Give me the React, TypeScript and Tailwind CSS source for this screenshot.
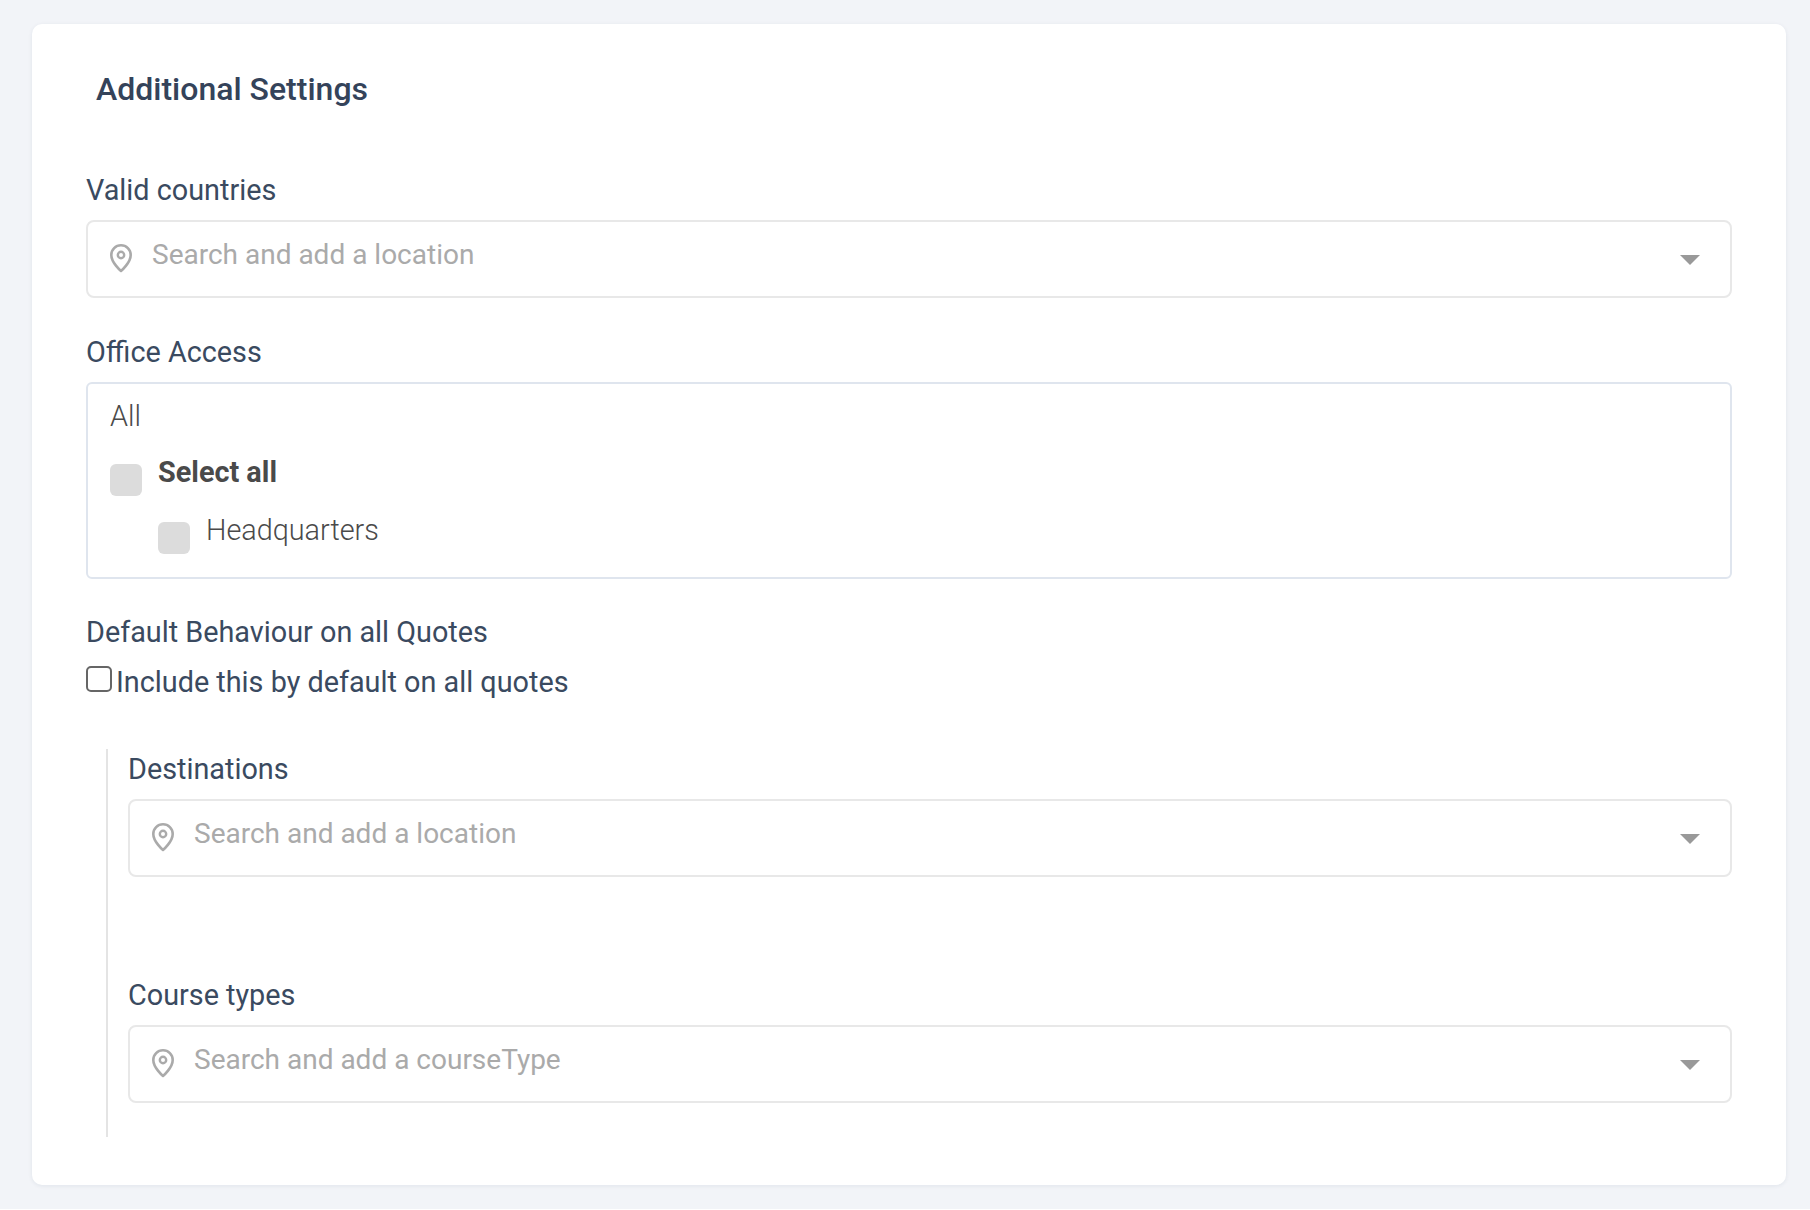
const PinIcon = () => (
  <svg width="22" height="29" viewBox="0 0 22 29" fill="none" className="shrink-0">
    <path
      d="M11 27C11 27 20.7 18.8 20.7 11C20.7 5.5 16.4 1.3 11 1.3C5.6 1.3 1.3 5.5 1.3 11C1.3 18.8 11 27 11 27Z"
      stroke="#aaaaaa"
      strokeWidth="2.6"
      strokeLinejoin="round"
    />
    <circle cx="11" cy="11" r="3.2" stroke="#aaaaaa" strokeWidth="2.4" />
  </svg>
);

const LocationSelect = ({ placeholder }: { placeholder: string }) => (
  <div className="flex h-[78px] items-center rounded-[8px] border-2 border-[#e8e8e8] bg-white pl-[22px] pr-[30px]">
    <div className="mt-[-2px]">
      <PinIcon />
    </div>
    <span className="ml-[20px] mt-[-9px] flex-1 text-[28px] leading-[36px] text-[#aaaaaa]">
      {placeholder}
    </span>
    <div className="mt-[2px] h-0 w-0 border-x-[10px] border-t-[10px] border-x-transparent border-t-[#999999]" />
  </div>
);

const Label = ({ children }: { children: string }) => (
  <label className="mb-[12px] block text-[28.8px] leading-[36px] text-[#3a4a60]">
    {children}
  </label>
);

const App = () => {
  return (
    <div className="bg-[#f2f4f8] pb-[24px] pl-[32px] pr-[24px] pt-[24px] font-['Roboto',sans-serif]">
      <div className="rounded-[10px] bg-white pb-[48px] pl-[54px] pr-[54px] pt-[45px] shadow-[0_1px_4px_rgba(30,50,90,0.08)]">
        <h2 className="mb-[63px] pl-[10px] text-[32px] font-medium leading-[40px] text-[#34435a]">
          Additional Settings
        </h2>

        <Label>Valid countries</Label>
        <LocationSelect placeholder="Search and add a location" />

        <div className="mt-[36px]">
          <Label>Office Access</Label>
          <div className="h-[197px] rounded-[6px] border-2 border-[#dfe5ee] pl-[22px] pt-[14px] text-[#4a4a4a]">
            <div className="text-[28.8px] font-light leading-[36px]">All</div>
            <div className="mt-[24px] flex items-start">
              <div className="mt-[6px] h-[32px] w-[32px] rounded-[6px] bg-[#dcdcdc]" />
              <span className="ml-[16px] text-[28.8px] font-bold leading-[28px]">Select all</span>
            </div>
            <div className="ml-[48px] mt-[20px] flex items-start">
              <div className="mt-[6px] h-[32px] w-[32px] rounded-[6px] bg-[#dcdcdc]" />
              <span className="ml-[16px] text-[28.8px] font-light leading-[28px]">Headquarters</span>
            </div>
          </div>
        </div>

        <div className="mt-[35px]">
          <label className="block text-[28.8px] leading-[36px] text-[#3a4a60]">
            Default Behaviour on all Quotes
          </label>
          <div className="mt-[14px] flex items-center">
            <input
              type="checkbox"
              className="mb-[6px] h-[26px] w-[26px] appearance-none rounded-[5px] border-2 border-[#666666] bg-white"
            />
            <span className="ml-[4px] text-[28.8px] leading-[36px] text-[#3a4a60]">
              Include this by default on all quotes
            </span>
          </div>
        </div>

        <div className="ml-[20px] mt-[49px] border-l-2 border-[#e4e4e4] pb-[34px] pl-[20px] pt-[2px]">
          <Label>Destinations</Label>
          <LocationSelect placeholder="Search and add a location" />
          <div className="mt-[100px]">
            <Label>Course types</Label>
            <LocationSelect placeholder="Search and add a courseType" />
          </div>
        </div>
      </div>
    </div>
  );
};

export default App;
